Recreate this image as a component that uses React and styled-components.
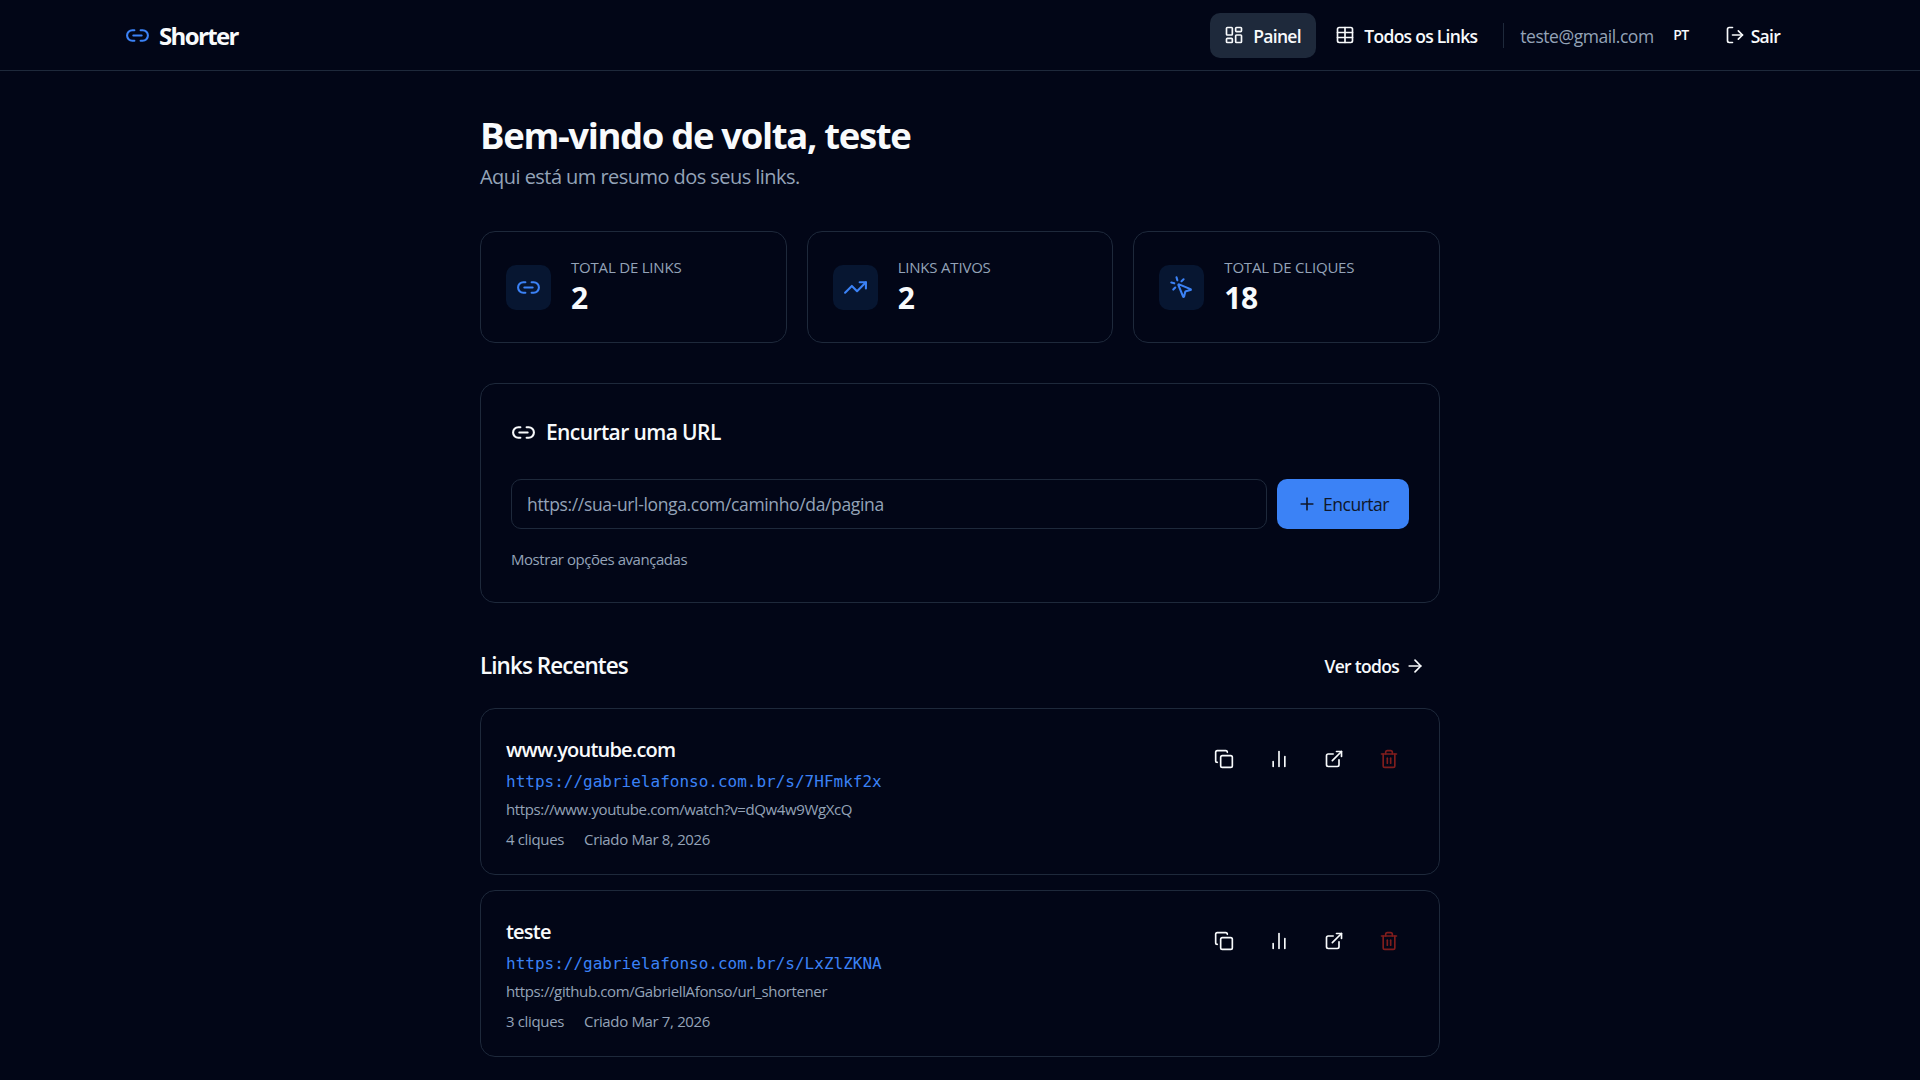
import React from "react";
import styled, { createGlobalStyle } from "styled-components";
import {
  Link2,
  LayoutDashboard,
  Table,
  LogOut,
  TrendingUp,
  MousePointerClick,
  Plus,
  ArrowRight,
  Copy,
  ChartNoAxesColumn,
  ExternalLink,
  Trash2,
} from "lucide-react";

const GlobalStyle = createGlobalStyle`
  * { box-sizing: border-box; }
  html, body { margin: 0; background: #020617; overflow: hidden; }
  body {
    font-family: "Open Sans", "Noto Sans", sans-serif;
    color: #f8fafc;
    letter-spacing: -0.5px;
  }
`;

const Header = styled.header`
  height: 71px;
  border-bottom: 1px solid #1e293b;
  display: flex;
  align-items: center;
  justify-content: space-between;
  padding: 0 125px;
`;

const Logo = styled.div`
  display: flex;
  align-items: center;
  gap: 9px;
  font-size: 24px;
  font-weight: 700;
  letter-spacing: -1.65px;
  color: #f8fafc;
  svg { color: #3b82f6; }
`;

const Nav = styled.nav`
  display: flex;
  align-items: center;
  gap: 2px;
`;

const NavItem = styled.a`
  display: flex;
  align-items: center;
  gap: ${(p) => p.$gap || 9}px;
  height: 45px;
  padding: 1px 15px 0 ${(p) => (p.$active ? 14 : 15)}px;
  margin-right: ${(p) => (p.$active ? 2.5 : 0)}px;
  border-radius: 10px;
  font-size: 17.5px;
  font-weight: 600;
  letter-spacing: -0.72px;
  color: #f8fafc;
  background: ${(p) => (p.$active ? "#1e293b" : "transparent")};
  svg { margin-top: -2px; }
`;

const Divider = styled.div`
  width: 1px;
  height: 25px;
  background: #1e293b;
  margin: 0 14px 0 9px;
`;

const Email = styled.span`
  font-size: 17.5px;
  color: #94a3b8;
  letter-spacing: -0.45px;
  padding-top: 1px;
`;

const Lang = styled.span`
  font-size: 14px;
  font-weight: 600;
  color: #f8fafc;
  margin: 0 19px 0 17.5px;
  position: relative;
  top: -1px;
`;

const Main = styled.main`
  width: 960px;
  margin: 0 auto;
  padding-top: 40px;
`;

const Title = styled.h1`
  margin: 0;
  font-size: 36.5px;
  line-height: 48px;
  font-weight: 700;
  letter-spacing: -1.35px;
  color: #f8fafc;
`;

const Subtitle = styled.p`
  margin: 4px 0 0;
  font-size: 20px;
  line-height: 28px;
  color: #94a3b8;
  letter-spacing: -0.55px;
`;

const Stats = styled.section`
  display: grid;
  grid-template-columns: repeat(3, 1fr);
  gap: 20px;
  margin-top: 40px;
`;

const Card = styled.div`
  border: 1px solid #1e293b;
  border-radius: 15px;
  background: #020617;
`;

const StatCard = styled(Card)`
  height: 112px;
  padding: 0 25px;
  display: flex;
  align-items: center;
  gap: 20px;
`;

const StatIcon = styled.div`
  width: 45px;
  height: 45px;
  border-radius: 10px;
  background: #071631;
  color: #3b82f6;
  display: flex;
  align-items: center;
  justify-content: center;
`;

const StatLabel = styled.div`
  font-size: 15px;
  line-height: 20px;
  color: #94a3b8;
  text-transform: uppercase;
  letter-spacing: -0.2px;
`;

const StatValue = styled.div`
  margin-top: 2px;
  font-size: 30px;
  line-height: 38px;
  font-weight: 700;
  color: #f8fafc;
`;

const ShortenCard = styled(Card)`
  margin-top: 40px;
  height: 220px;
  padding: 33px 30px 0;
`;

const CardHeading = styled.h2`
  margin: 0;
  display: flex;
  align-items: center;
  gap: 10px;
  font-size: 21px;
  line-height: 30px;
  font-weight: 600;
  letter-spacing: -0.6px;
`;

const InputRow = styled.div`
  display: flex;
  gap: 10px;
  margin-top: 32px;
`;

const UrlInput = styled.input`
  flex: 1;
  height: 50px;
  border: 1px solid #1e293b;
  border-radius: 10px;
  background: transparent;
  padding: 0 15px;
  font-family: inherit;
  font-size: 17.5px;
  letter-spacing: -0.35px;
  color: #f8fafc;
  &::placeholder { color: #94a3b8; opacity: 1; }
`;

const SubmitButton = styled.button`
  width: 132px;
  height: 50px;
  border: none;
  border-radius: 10px;
  background: #3b82f6;
  color: #0f172a;
  display: flex;
  align-items: center;
  justify-content: center;
  gap: 6px;
  font-family: inherit;
  font-size: 17.5px;
  font-weight: 500;
  letter-spacing: -0.5px;
`;

const AdvancedLink = styled.div`
  margin-top: 20px;
  font-size: 15px;
  line-height: 20px;
  color: #94a3b8;
  letter-spacing: -0.45px;
`;

const SectionHeader = styled.div`
  margin-top: 44px;
  display: flex;
  align-items: center;
  justify-content: space-between;
  height: 36px;
`;

const SectionTitle = styled.h2`
  margin: 0;
  font-size: 22.5px;
  font-weight: 600;
  letter-spacing: -0.95px;
`;

const SeeAll = styled.a`
  display: flex;
  align-items: center;
  gap: 6px;
  padding: 2px 15px 0 0;
  font-size: 17.5px;
  font-weight: 600;
  letter-spacing: -0.7px;
  color: #f8fafc;
`;

const LinkList = styled.div`
  margin-top: 25px;
  display: flex;
  flex-direction: column;
  gap: 15px;
`;

const LinkCard = styled(Card)`
  height: 167px;
  padding: 25px;
  display: flex;
  justify-content: space-between;
  align-items: flex-start;
`;

const LinkBody = styled.div`
  margin-top: 3px;
`;

const LinkTitle = styled.div`
  font-size: 20px;
  line-height: 26px;
  font-weight: 600;
  letter-spacing: -0.8px;
`;

const ShortUrl = styled.div`
  margin-top: 6px;
  font-family: "DejaVu Sans Mono", "Liberation Mono", monospace;
  font-size: 16px;
  line-height: 26px;
  letter-spacing: 0;
  color: #3b82f6;
`;

const LongUrl = styled.div`
  margin-top: 4px;
  font-size: 15px;
  line-height: 20px;
  letter-spacing: -0.38px;
  color: #94a3b8;
`;

const Meta = styled.div`
  margin-top: 10px;
  display: flex;
  gap: 20px;
  font-size: 15px;
  line-height: 20px;
  letter-spacing: -0.35px;
  color: #94a3b8;
`;

const Actions = styled.div`
  display: flex;
  gap: 10px;
  margin: 2px 3px 0 0;
`;

const ActionButton = styled.button`
  width: 45px;
  height: 45px;
  border: none;
  background: transparent;
  display: flex;
  align-items: center;
  justify-content: center;
  color: ${(p) => (p.$danger ? "#7f1d1d" : "#f8fafc")};
`;

const stats = [
  { label: "Total de Links", value: "2", Icon: Link2 },
  { label: "Links Ativos", value: "2", Icon: TrendingUp },
  { label: "Total de Cliques", value: "18", Icon: MousePointerClick },
];

const links = [
  {
    title: "www.youtube.com",
    short: "https://gabrielafonso.com.br/s/7HFmkf2x",
    long: "https://www.youtube.com/watch?v=dQw4w9WgXcQ",
    clicks: "4 cliques",
    created: "Criado Mar 8, 2026",
  },
  {
    title: "teste",
    short: "https://gabrielafonso.com.br/s/LxZlZKNA",
    long: "https://github.com/GabriellAfonso/url_shortener",
    clicks: "3 cliques",
    created: "Criado Mar 7, 2026",
  },
];

export default function App() {
  return (
    <>
      <GlobalStyle />
      <Header>
        <Logo>
          <Link2 size={25} />
          Shorter
        </Logo>
        <Nav>
          <NavItem $active>
            <LayoutDashboard size={20} />
            Painel
          </NavItem>
          <NavItem>
            <Table size={20} />
            Todos os Links
          </NavItem>
          <Divider />
          <Email>teste@gmail.com</Email>
          <Lang>PT</Lang>
          <NavItem $gap={6}>
            <LogOut size={20} />
            Sair
          </NavItem>
        </Nav>
      </Header>
      <Main>
        <Title>Bem-vindo de volta, teste</Title>
        <Subtitle>Aqui está um resumo dos seus links.</Subtitle>
        <Stats>
          {stats.map(({ label, value, Icon }) => (
            <StatCard key={label}>
              <StatIcon>
                <Icon size={25} />
              </StatIcon>
              <div>
                <StatLabel>{label}</StatLabel>
                <StatValue>{value}</StatValue>
              </div>
            </StatCard>
          ))}
        </Stats>
        <ShortenCard>
          <CardHeading>
            <Link2 size={25} />
            Encurtar uma URL
          </CardHeading>
          <InputRow>
            <UrlInput placeholder="https://sua-url-longa.com/caminho/da/pagina" />
            <SubmitButton>
              <Plus size={20} />
              Encurtar
            </SubmitButton>
          </InputRow>
          <AdvancedLink>Mostrar opções avançadas</AdvancedLink>
        </ShortenCard>
        <SectionHeader>
          <SectionTitle>Links Recentes</SectionTitle>
          <SeeAll>
            Ver todos
            <ArrowRight size={20} />
          </SeeAll>
        </SectionHeader>
        <LinkList>
          {links.map((link) => (
            <LinkCard key={link.short}>
              <LinkBody>
                <LinkTitle>{link.title}</LinkTitle>
                <ShortUrl>{link.short}</ShortUrl>
                <LongUrl>{link.long}</LongUrl>
                <Meta>
                  <span>{link.clicks}</span>
                  <span>{link.created}</span>
                </Meta>
              </LinkBody>
              <Actions>
                <ActionButton><Copy size={20} /></ActionButton>
                <ActionButton><ChartNoAxesColumn size={20} /></ActionButton>
                <ActionButton><ExternalLink size={20} /></ActionButton>
                <ActionButton $danger><Trash2 size={20} /></ActionButton>
              </Actions>
            </LinkCard>
          ))}
        </LinkList>
      </Main>
    </>
  );
}
